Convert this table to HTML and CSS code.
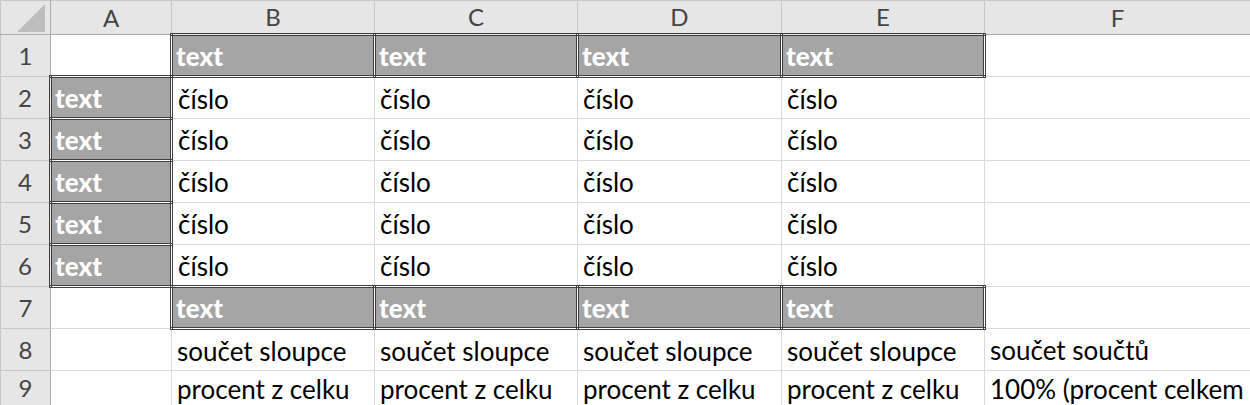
FILE: index.html
```html
<!DOCTYPE html>
<html lang="cs">
<head>
<meta charset="UTF-8">
<title>Sešit1</title>
<link rel="stylesheet" href="styles.css">
</head>
<body>
  <table class="sheet">
    <colgroup>
      <col class="c-num"><col class="c-a"><col class="c-b"><col class="c-c"><col class="c-d"><col class="c-e"><col class="c-f">
    </colgroup>
    <tr class="head">
      <th class="corner"><span class="tri"></span></th>
      <th>A</th><th>B</th><th>C</th><th>D</th><th>E</th><th>F</th>
    </tr>
    <tr>
      <th class="rn">1</th>
      <td></td>
      <td class="check">text</td><td class="check">text</td><td class="check">text</td><td class="check">text</td>
      <td></td>
    </tr>
    <tr>
      <th class="rn">2</th>
      <td class="check">text</td>
      <td>číslo</td><td>číslo</td><td>číslo</td><td>číslo</td>
      <td></td>
    </tr>
    <tr>
      <th class="rn">3</th>
      <td class="check">text</td>
      <td>číslo</td><td>číslo</td><td>číslo</td><td>číslo</td>
      <td></td>
    </tr>
    <tr>
      <th class="rn">4</th>
      <td class="check">text</td>
      <td>číslo</td><td>číslo</td><td>číslo</td><td>číslo</td>
      <td></td>
    </tr>
    <tr>
      <th class="rn">5</th>
      <td class="check">text</td>
      <td>číslo</td><td>číslo</td><td>číslo</td><td>číslo</td>
      <td></td>
    </tr>
    <tr>
      <th class="rn">6</th>
      <td class="check">text</td>
      <td>číslo</td><td>číslo</td><td>číslo</td><td>číslo</td>
      <td></td>
    </tr>
    <tr>
      <th class="rn">7</th>
      <td></td>
      <td class="check">text</td><td class="check">text</td><td class="check">text</td><td class="check">text</td>
      <td></td>
    </tr>
    <tr>
      <th class="rn">8</th>
      <td></td>
      <td>součet sloupce</td><td>součet sloupce</td><td>součet sloupce</td><td>součet sloupce</td>
      <td>součet součtů</td>
    </tr>
    <tr class="last">
      <th class="rn">9</th>
      <td></td>
      <td>procent z celku</td><td>procent z celku</td><td>procent z celku</td><td>procent z celku</td>
      <td>100% (procent celkem</td>
    </tr>
  </table>
</body>
</html>
```

FILE: styles.css
```css
body { margin: 0; background: #fff; overflow: hidden; font-family: Lato, "Open Sans", sans-serif; }
.sheet { border-collapse: collapse; table-layout: fixed; width: 1250px; font-size: 26px; color: #000; }
.c-num { width: 50px; }
.c-a { width: 121px; }
.c-b { width: 203px; }
.c-c { width: 203px; }
.c-d { width: 204px; }
.c-e { width: 203px; }
.c-f { width: 266px; }
.sheet tr { height: 42px; }
.sheet tr.head { height: 34px; }
.sheet tr.last { height: 35px; }
.sheet th { background: #e6e6e6; color: #444; font-size: 24px; font-weight: normal; border: 1px solid #c6c6c6; padding: 0; line-height: 1; }
.sheet tr.head th { border-bottom: 1px solid #ababab; }
.sheet th.rn { border-right: 1px solid #ababab; text-align: center; }
.sheet th.corner { position: relative; border-right: 1px solid #ababab; }
.tri { position: absolute; right: 5px; bottom: 2px; width: 0; height: 0; border-left: 28px solid transparent; border-bottom: 28px solid #bdbdbd; }
.sheet td { border: 1px solid #dadada; padding: 1px 5px 0; line-height: 1; white-space: nowrap; overflow: hidden; vertical-align: middle; }
.sheet tr.last td { border-bottom: 0; }
.sheet td.check { background: #a5a5a5; color: #fff; font-weight: 900; border: 3px double #3f3f3f; padding-left: 3px; }
```
